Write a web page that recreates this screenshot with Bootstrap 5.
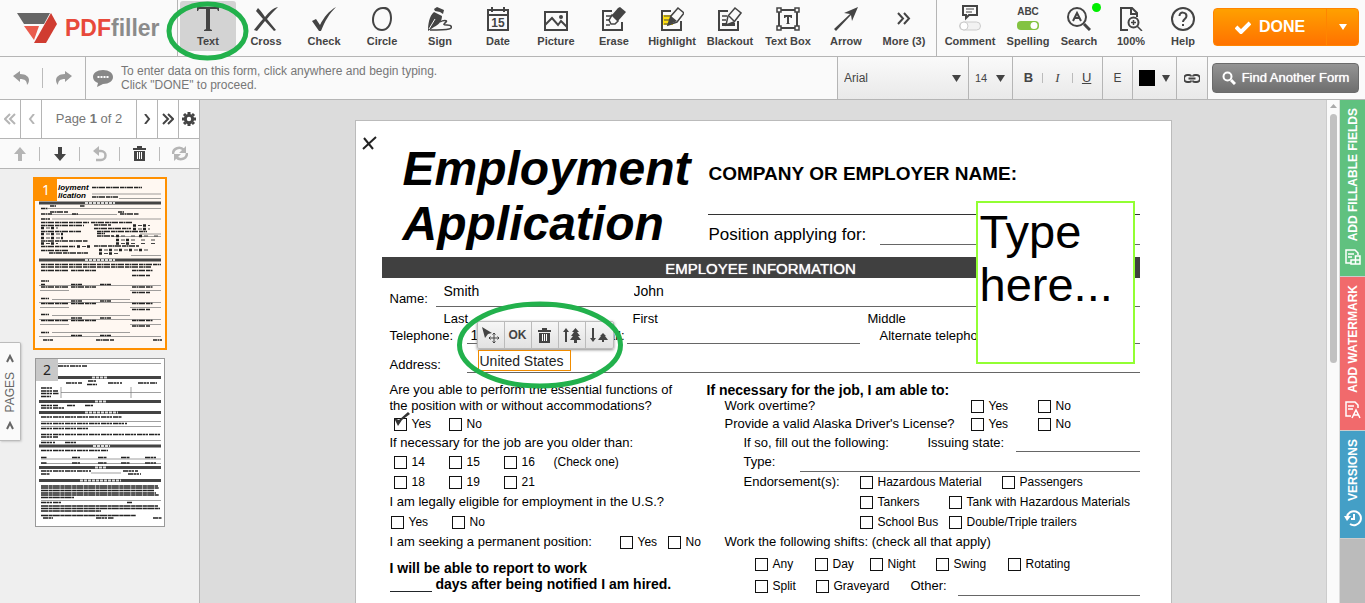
<!DOCTYPE html>
<html lang="en">
<head>
<meta charset="utf-8">
<meta name="viewport" content="width=device-width, initial-scale=1">
<title>PDFfiller - Employment Application</title>
<link href="https://cdn.jsdelivr.net/npm/bootstrap@5.3.0/dist/css/bootstrap.min.css" rel="stylesheet">
<style>
:root{--line:#b5b5b5;--ink:#444;--green:#22b14c}
body{font-family:"Liberation Sans",Arial,sans-serif;font-size:13px;line-height:16px;color:var(--ink);background:#dcdcdc}
button,input,select,textarea{font-family:inherit;color:inherit}
button{border:0;background:none;padding:0}
svg{display:block;flex:none}
.ico{fill:none;stroke:currentColor;stroke-width:2}
.topbar{background:#fafafa;border-bottom:1px solid var(--line);height:57px}
.brand-area{width:178px;border-right:1px solid var(--line);padding-left:17px;gap:7px}
.brand-name{font-size:23px;font-weight:700;line-height:30px;color:#e8493a}
.brand-name span{color:#8b8b8b}
.tool{width:58px;height:50px;margin-top:1px;padding-top:6px;font-size:11px;font-weight:700;line-height:14px;display:flex;flex-direction:column;align-items:center;gap:3px;border-radius:3px;white-space:nowrap}
.tool-on .tool-face{background:#d3d3d3}
.tool-face{border-radius:3px;width:56px;height:50px;margin-top:-6px;padding-top:6px;display:flex;flex-direction:column;align-items:center;gap:3px}
.tool-sm{width:52px}
.tool-mid{width:50px}
.tool-wide{width:66px;padding-top:4px}
.tools{padding-left:1px}
.done{background:linear-gradient(#ffa000,#ff7200);border:1px solid #ff8500;border-radius:4px;color:#fff;width:146px;height:38px;margin:8px 6px 0 4px}
.done b{font-size:16px}
.done-more{width:32px;border-left:1px solid #ff8500}
.optbar{background:#fafafa;border-bottom:1px solid var(--line);height:43px}
.undo-area{width:86px;border-right:1px solid var(--line);gap:13px}
.sep{width:1px;height:20px;background:#bbb}
.hint{font-size:12px;line-height:14px;color:#777;padding-left:7px;gap:8px}
.opt{background:linear-gradient(#fafafa,#e9e9e9);border-left:1px solid var(--line);display:flex;align-items:center;justify-content:center}
.opt select{appearance:none;border:0;background:transparent;font-size:12px;padding:0;min-width:0;flex:1}
.opt .size-pick{font-size:11px}
.opt-font{width:131px;padding:0 7px 0 6px}
.opt-size{width:44px;padding:0 7px 0 6px}
.opt-style{width:90px;gap:9px}
.opt-style .sep{height:10px}
.opt-style i{font-family:"Liberation Serif",serif}
.opt-erase{width:30px;font-size:12px}
.opt-color{width:44px}
.opt-color button{gap:7px}
.opt-link{width:32px;border-right:1px solid var(--line)}
.find{background:linear-gradient(#949494,#6e6e6e);border:1px solid #6b6b6b;border-radius:4px;color:#fff;width:147px;height:30px;margin:6px 6px 0 4px;gap:6px;font-size:13px;text-shadow:0 0 1px #fff}
.side{width:200px;background:#efefef;border-right:1px solid var(--line)}
.pager{height:39px;background:#fff;border-bottom:1px solid var(--line);color:#777}
.pager button{width:21px;border-right:1px solid var(--line);color:var(--ink);display:flex;align-items:center;justify-content:center}
.pager button:last-child{border-right:0;width:20px}
.pager .dim,.acts .dim{color:#b5b5b5}
.pager .page-no{border-right:1px solid var(--line)}
.acts{height:30px;background:#fafafa;border-bottom:1px solid var(--line)}
.acts .sep{height:14px}
.acts button{flex:1;display:flex;justify-content:center}
.thumbs{padding:8px 0 0 1px;gap:8px}
.thumb{position:relative;display:block;margin:0 auto}
.thumb span{position:absolute;left:0;top:0;width:22px;height:22px;font:14px/22px "Noto Sans",sans-serif;text-align:center}
.thumb-1{width:134px;height:173px;border:2px solid #ff9000;background:#fff8f2}
.thumb-1 span{background:#ff9000;color:#fff}
.thumb-2{width:130px;height:169px;border:1px solid #999;background:#fff}
.thumb-2 span{background:#c8c8c8;color:#222}
.pages-tab{position:absolute;left:0;top:242px;width:21px;height:99px;padding:11px 0 10px;background:#fafafa;border:1px solid #bbb;border-left:0;border-radius:0 2px 2px 0;box-shadow:1px 1px 2px #ccc;font-size:12px;color:#666}
.upward{writing-mode:vertical-rl;transform:rotate(180deg);white-space:nowrap}
.canvas{overflow:hidden}
.work-area{min-height:0}
.scroller{width:14px;background:#fafafa;border-left:1px solid #ccc;border-right:1px solid #ddd}
.scroller i{width:7px;height:249px;border-radius:4px;background:#c1c1c1;margin-top:6px}
.right-tabs{width:25px;background:#bbb}
.right-tabs button{color:#fff;font-size:12px;font-weight:700;display:flex;flex-direction:column;align-items:center;gap:8px;border-bottom:1px solid #ccc;padding:8px 0 11px}
.tab-fields{background:#60c17f}
.tab-mark{background:#f16a6c}
.tab-versions{background:#449fc6}
.sheet{width:100%;max-width:817px;min-height:520px;margin:20px auto 0;padding:0 31px 0 26px;background:#fff;border:1px solid #bbb;position:relative;color:#000}
.sheet-head{display:grid;grid-template-columns:326px 1fr;height:136px}
.sheet h1{font-size:48px;line-height:55px;font-weight:700;font-style:italic;margin:0;padding:20px 0 0 21px}
.company{margin-top:43px;height:51px;border-bottom:1px solid #333;font-size:19px;line-height:20px;font-weight:700;padding-left:1px}
.position{height:30px;font-size:17px;line-height:20px;padding-left:1px;gap:14px}
.rule{border-bottom:1px solid #666;align-self:stretch}
.band{background:#404040;color:#fff;height:21px;font-size:15px;line-height:23px;text-align:center;text-shadow:0 0 1px #fff}
.frow{display:flex;align-items:flex-end;font-size:13px;line-height:16px}
.frow .rule input{border:0;background:none;padding:0;font-size:14px;line-height:16px;height:16px;width:100px}
.h29{height:29px}.h20{height:20px}.h17{height:17px}
.names{display:grid;grid-template-columns:190px 1fr;align-items:end;padding:0 0 7px 8px}
.subnames{display:grid;grid-template-columns:189px 235px 1fr;padding-left:54px;width:100%}
.w46{width:46px}.w77{width:77px}.w122{width:122px}.w34{width:34px}.w233{width:233px}
.qs{display:grid;grid-template-columns:317px 1fr;padding:9px 0 0 8px}
.qs .ln{display:flex;align-items:center;height:20px;font-size:13px;white-space:nowrap}
.qs .l16{height:16px}.qs .l18{height:18px}
.qs .strong{font-weight:700;font-size:14px}
.gap-above{margin-top:2px}
.in17{padding-left:18px}.in36{padding-left:37px}.in48{padding-left:48px}
.w184{width:184px}.w88{width:88px}.w56{width:56px}
.opts{display:grid!important;align-items:center}
.opts label{display:flex;align-items:center;gap:5px;font-size:12px}
.opts input{appearance:none;width:13px;height:13px;border:1px solid #111;border-radius:0;margin:0;background:#fff;flex:none}
.c-age{grid-template-columns:55px 55px 50px 1fr;padding-left:4px}
.c-yn{grid-template-columns:61px 1fr;padding-left:1px}
.c-seek{grid-template-columns:230px 48px 1fr}
.c-work{grid-template-columns:246px 67px 1fr}
.c-end{grid-template-columns:116px 142px 1fr}
.c-tank{grid-template-columns:89px 1fr;padding-left:153px}
.c-shift{grid-template-columns:60px 55px 66px 72px 1fr}
.c-split{grid-template-columns:61px 95px 47px 1fr}
.type-box{position:absolute;left:620px;top:80px;width:159px;height:163px;border:2px solid #92ff33;background:#fff;font-size:47px;line-height:53px;padding:2px;resize:none;overflow:hidden}
.type-box::placeholder{color:#000;opacity:1}
.field-edit{position:absolute;left:121px;top:200px}
.mini{height:28px;border:1px solid #bbb;border-radius:2px;background:linear-gradient(#f6f6f6,#e2e2e2);box-shadow:0 1px 3px #888;color:var(--ink)}
.mini button{width:27px;display:flex;align-items:center;justify-content:center;border-right:1px solid #bbb;font-size:12px;font-weight:700}
.mini button:last-child{border:0}
.field-edit input{display:block;width:93px;height:21px;margin:1px 0 0 1px;border:1px solid #f08c00;padding:0 1px;font-size:14px;background:#fff;color:#222}
.ring-a{position:absolute;left:166px;top:1px;z-index:5;pointer-events:none}
.ring-b{position:absolute;left:101px;top:180px;pointer-events:none}
.mark-x{position:absolute;left:6px;top:15px}
.mark-v{position:absolute;left:0;top:-4px}
.live-dot{position:absolute;right:4px;top:2px;width:9px;height:9px;border-radius:50%;background:#0e0}
</style>
</head>
<body class="vh-100 overflow-hidden d-flex flex-column">

<header class="topbar d-flex flex-shrink-0 position-relative">
  <a href="#" class="brand-area d-flex align-items-center text-decoration-none flex-shrink-0">
    <svg width="41" height="31" viewBox="0 0 41 31"><path fill="#666" d="M0 0h33l-6 11H7z"/><path fill="#ea5b4c" d="M7 13h15l-5 14z"/><path fill="#d03c31" d="M34 0l6 11-11 19H17z"/></svg>
    <span class="brand-name">PDF<span>filler</span></span>
  </a>
  <svg class="ring-a" width="83" height="60" viewBox="0 0 83 60"><ellipse cx="41.500" cy="30" rx="38.500" ry="27" fill="none" stroke="#22b14c" stroke-width="5"/></svg>
  <nav class="tools d-flex flex-grow-1">
    <button class="tool tool-on"><span class="tool-face"><svg width="24" height="24" viewBox="0 0 24 24" fill="#444"><path d="M1 0h22v4h-1l-1-2h-7v20l2 1v1H8v-1l2-1V2H3L2 4H1z"/></svg>Text</span></button>
    <button class="tool"><svg width="24" height="24" viewBox="0 0 24 24" fill="#444"><path d="M4 1c3 3 5 6 7 9 4-5 8-9 13-10-4 4-8 8-11 12l9 11-2 1-9-10-8 10-3-1c3-4 6-8 9-11L2 4z"/></svg>Cross</button>
    <button class="tool"><svg width="24" height="24" viewBox="0 0 24 24" fill="#444"><path d="M0 14l4-2 4 6C12 10 17 4 24 0 17 7 13 14 9 24H7z"/></svg>Check</button>
    <button class="tool"><svg width="24" height="24" viewBox="0 0 24 24"><path fill="#444" fill-rule="evenodd" d="M13 0c7-1 9 6 9 11 0 7-4 13-10 13S2 19 2 13C2 6 6 0 13 0zm0 2C7 2 4 7 4 13c0 5 3 9 8 9s8-5 8-11c0-5-2-9-7-9z"/></svg>Circle</button>
    <button class="tool"><svg width="24" height="24" viewBox="0 0 24 24"><path fill="#444" d="M6 2l3-2 7 3-1 4-3-2-5-1zM6 5l8 4c0 6-4 9-8 11l-6 4c0-6 1-15 6-19z"/><path stroke="#fafafa" d="M1 22L7 12"/><path fill="none" stroke="#444" stroke-width="1.500" d="M12 15c3-2 8-2 6 0s-4 3 1 3 6 3 2 4-11 1-19 1"/></svg>Sign</button>
    <button class="tool"><svg width="24" height="24" viewBox="0 0 24 24"><path class="ico" d="M2 3h20v20H2zM2 8h20M6 0v5m12-5v5"/><text x="12" y="20" text-anchor="middle" font-size="12" font-weight="700" fill="#444">15</text></svg>Date</button>
    <button class="tool"><svg width="24" height="24" viewBox="0 0 24 24"><path class="ico" d="M1 5h22v18H1zM1 18l7-7 6 7 3-4 6 6"/><circle cx="17" cy="10" r="2" fill="#444"/></svg>Picture</button>
    <button class="tool"><svg width="24" height="24" viewBox="0 0 24 24"><path class="ico" d="M10 4H1v19h19v-8"/><path stroke="#444" stroke-width="1.500" d="M4 9h5m-5 4h3m-3 5h4"/><path d="M16 1l2-1 6 5-8 9-6-6z" fill="#444"/><path d="M10 8l6 6-3 3H9l-2-4z" fill="#fafafa" stroke="#444" stroke-width="1.500"/></svg>Erase</button>
    <button class="tool"><svg width="24" height="24" viewBox="0 0 24 24"><path fill="#ffe012" d="M3 8h10v10H3z"/><path class="ico" d="M11 4H2v19h19v-9"/><path stroke="#444" d="M4 9h7m-7 4h5m-5 4h6"/><path d="M18 1l6 5-7 9-9 3 3-9z" fill="#fafafa" stroke="#444" stroke-width="1.500"/><path d="M11 9l6 5-9 4z" fill="#444"/></svg>Highlight</button>
    <button class="tool"><svg width="24" height="24" viewBox="0 0 24 24"><path class="ico" d="M10 4H1v19h19v-9"/><path stroke="#444" stroke-width="1.500" d="M4 9h5m-5 4h4"/><path d="M4 16h13v3H4z" fill="#444"/><path d="M17 1l6 5-7 9-8 3 2-9z" fill="#fafafa" stroke="#444" stroke-width="1.500"/><path stroke="#444" stroke-width="1.500" d="M11 9l5 5"/></svg>Blackout</button>
    <button class="tool"><svg width="24" height="24" viewBox="0 0 24 24"><path class="ico" d="M3 3h18v18H3z"/><path d="M1 1h4v4H1zM19 1h4v4h-4zM1 19h4v4H1zM19 19h4v4h-4z" fill="#fafafa" stroke="#444" stroke-width="1.500"/><path d="M8 8h8v3h-1l-1-1h-1v6l1 1h-4l1-1v-6h-1l-1 1H8z" fill="#444"/></svg>Text Box</button>
    <button class="tool"><svg width="24" height="24" viewBox="0 0 24 24" fill="#444"><path d="M24 0l-6 14-1-6L2 24l-2-2L16 7l-6-1z"/></svg>Arrow</button>
    <button class="tool"><svg width="24" height="24" viewBox="0 0 24 24"><path class="ico" d="M6 6l5 5.500L6 17M12 6l5 5.500-5 5.500"/></svg>More (3)</button>
  </nav>
  <div class="d-flex border-start" style="border-color:#b5b5b5!important">
    <button class="tool tool-wide"><svg width="24" height="26" viewBox="0 0 24 26"><path class="ico" d="M5 1h14v9h-8l-3 3v-3H5z"/><path d="M8 4h8M8 7h6" stroke="#444"/><rect x="1.500" y="17" width="21" height="8" rx="4" fill="#f2f2f2" stroke="#ccc"/><circle cx="6" cy="21" r="4" fill="#fff" stroke="#ccc"/></svg>Comment</button>
    <button class="tool tool-mid"><svg width="24" height="24" viewBox="0 0 24 24"><text x="12" y="8" text-anchor="middle" font-size="10" font-weight="700" fill="#444">ABC</text><rect x="1" y="14" width="22" height="9" rx="4" fill="#83c341"/><circle cx="18" cy="18.500" r="3.500" fill="#fff"/></svg>Spelling</button>
    <button class="tool tool-sm position-relative"><i class="live-dot"></i><svg width="24" height="24" viewBox="0 0 24 24"><g class="ico"><circle cx="10" cy="10" r="9"/><path stroke-width="3" d="M17 17l6 6"/><path d="M6 14l4-8 4 8M8 11h4"/></g></svg>Search</button>
    <button class="tool tool-sm"><svg width="24" height="24" viewBox="0 0 24 24"><g class="ico"><path d="M9 23H2V1h11l5 5v4M12 1v6h6"/><circle cx="14.500" cy="15.500" r="5"/><path d="M18 19l5 5M12 15.500h5M14.500 13v5" stroke-width="1.500"/></g></svg>100%</button>
    <button class="tool tool-sm"><svg width="24" height="24" viewBox="0 0 24 24"><g class="ico"><circle cx="12" cy="12" r="11"/><path d="M8.500 9c0-5 7-4 7 0 0 3-3.500 3-3.500 6M12 17v2"/></g></svg>Help</button>
  </div>
  <div class="done d-flex flex-shrink-0">
    <button class="flex-grow-1 d-flex align-items-center justify-content-center gap-2 text-white"><svg width="16" height="13" viewBox="0 0 16 13"><path d="M1 6l5 5 9-9" fill="none" stroke="#fff" stroke-width="4"/></svg><b>DONE</b></button>
    <button class="done-more d-flex align-items-center justify-content-center" aria-label="More"><svg width="8" height="6"><path d="M0 0h8L4 6z" fill="#fff"/></svg></button>
  </div>
</header>

<div class="optbar d-flex flex-shrink-0">
  <div class="undo-area d-flex align-items-center justify-content-center flex-shrink-0">
    <button aria-label="Undo"><svg width="16" height="14" viewBox="0 0 16 14" fill="#999"><path d="M0 5l7-5v3c6 0 9 3 9 6 0 2-1 4-2 5 0-4-2-6-7-6v3z"/></svg></button>
    <span class="sep"></span>
    <button aria-label="Redo"><svg width="16" height="14" viewBox="0 0 16 14" fill="#999"><path d="M16 5L9 0v3C3 3 0 6 0 9c0 2 1 4 2 5 0-4 2-6 7-6v3z"/></svg></button>
  </div>
  <div class="d-flex align-items-center flex-grow-1 hint">
    <svg width="20" height="17" viewBox="0 0 20 17"><path fill="#888" d="M10 0c6 0 10 3 10 7s-4 7-10 7l-6 3 1-4C2 12 0 10 0 7c0-4 4-7 10-7z"/><path stroke="#fff" stroke-width="2" stroke-dasharray="2 1" d="M4.500 7h11"/></svg>
    <div>To enter data on this form, click anywhere and begin typing.<br>Click "DONE" to proceed.</div>
  </div>
  <label class="opt opt-font"><select aria-label="Font"><option>Arial</option></select><svg width="9" height="7"><path d="M0 0h9L4.500 7z" fill="#444"/></svg></label>
  <label class="opt opt-size"><select class="size-pick" aria-label="Size"><option>14</option></select><svg width="9" height="7"><path d="M0 0h9L4.500 7z" fill="#444"/></svg></label>
  <div class="opt opt-style">
    <button><b>B</b></button><span class="sep"></span><button><i>&nbsp;I&nbsp;</i></button><span class="sep"></span><button><u>U</u></button>
  </div>
  <div class="opt opt-erase"><button>E</button></div>
  <div class="opt opt-color"><button class="d-flex align-items-center" aria-label="Colour"><svg width="16" height="16"><path d="M0 0h16v16H0z"/></svg><svg width="8" height="7"><path d="M0 0h8L4 7z" fill="#444"/></svg></button></div>
  <div class="opt opt-link"><button aria-label="Link"><svg width="16" height="9" viewBox="0 0 16 9"><path fill="none" stroke="#444" stroke-width="2" d="M7 2.500C7 1.500 6 1 5 1H3.500a3.500 3.500 0 000 7H5c1 0 2-.5 2-1.500M9 2.500C9 1.500 10 1 11 1h1.500a3.500 3.500 0 010 7H11c-1 0-2-.5-2-1.500M4.500 4.500h7"/></svg></button></div>
  <button class="find d-flex align-items-center justify-content-center flex-shrink-0"><svg width="14" height="14" viewBox="0 0 14 14"><circle cx="5.500" cy="5.500" r="4" fill="none" stroke="#fff" stroke-width="2"/><path stroke="#fff" stroke-width="3" d="M9 9l4 4"/></svg>Find Another Form</button>
</div>

<div class="work-area d-flex flex-grow-1">
  <aside class="side position-relative flex-shrink-0">
    <div class="pager d-flex">
      <button class="dim" aria-label="First"><svg width="12" height="12"><path class="ico" d="M6 1L1 6l5 5M11 1L6 6l5 5"/></svg></button>
      <button class="dim" aria-label="Previous"><svg width="7" height="10"><path class="ico" d="M6 0L2 5l4 5"/></svg></button>
      <div class="page-no flex-grow-1 d-flex align-items-center justify-content-center"><span>Page <b>1</b> of 2</span></div>
      <button aria-label="Next"><svg width="7" height="10"><path class="ico" d="M1 0l4 5-4 5"/></svg></button>
      <button aria-label="Last"><svg width="12" height="12"><path class="ico" d="M1 1l5 5-5 5M6 1l5 5-5 5"/></svg></button>
      <button aria-label="Settings"><svg width="14" height="14" viewBox="0 0 14 14"><circle cx="7" cy="7" r="3.700" fill="none" stroke="#444" stroke-width="3"/><path stroke="#444" stroke-width="3" d="M7 0v2m0 10v2M0 7h2m10 0h2M2 2l1.500 1.500m7 7L12 12M2 12l1.500-1.500m7-7L12 2"/></svg></button>
    </div>
    <div class="acts d-flex align-items-center">
      <button class="dim" aria-label="Move up"><svg width="12" height="14"><path fill="#b5b5b5" d="M6 0l6 7H8v7H4V7H0z"/></svg></button><span class="sep"></span>
      <button aria-label="Move down"><svg width="12" height="14"><path fill="#444" d="M6 14l6-7H8V0H4v7H0z"/></svg></button><span class="sep"></span>
      <button class="dim" aria-label="Rotate"><svg width="14" height="16" viewBox="0 0 14 16"><path fill="none" stroke="#b5b5b5" stroke-width="2.500" d="M5 5h3a4.500 4.500 0 110 9H3"/><path fill="#b5b5b5" d="M0 5l6-5v10z"/></svg></button><span class="sep"></span>
      <button aria-label="Delete"><svg width="13" height="15" viewBox="0 0 13 15"><path fill="#444" d="M0 2h4V0h5v2h4v2H0zM1 5h11v10H1z"/><path stroke="#fff" d="M4.500 6v7m2-7v7m2-7v7"/></svg></button><span class="sep"></span>
      <button class="dim" aria-label="Refresh"><svg width="16" height="15" viewBox="0 0 16 15"><path fill="none" stroke="#b5b5b5" stroke-width="2.500" d="M1 8c0-6 7-8 11-4M15 7c0 6-7 8-11 4"/><path fill="#b5b5b5" d="M14 0v7H7zM2 15V8h7z"/></svg></button>
    </div>
    <div class="thumbs d-flex flex-column">
      <button class="thumb thumb-1"><svg width="130" height="169" viewBox="35 179 130 169"><g font-weight="700" font-style="italic" font-size="8"><text x="58" y="190">loyment</text><text x="58" y="198">lication</text></g>
        <path stroke="#444" stroke-width="3" d="M39 203h122M39 260h122"/>
        <path stroke="#ddd" stroke-width="2" stroke-dasharray="3 1" d="M85 203h30M85 260h30"/>
        <path stroke="#777" stroke-width=".7" d="M92 194h69M119 198.500h42M48 208.500h113M52 214.500h65M52 219h109M140 234h21M112 236.500h49M131 255.500h30M39 285.500h122M40 290.500h29M130 290.500h31M52 299.500h78M39 302.500h122M40 307.500h29M130 307.500h31M52 315.500h78M39 319.500h122M40 324.500h29M130 324.500h31M52 332.500h78M39 336.500h122"/>
        <path stroke="#222" stroke-width="1.500" stroke-dasharray="4 .5 2 .5 6 1" d="M92 187.500h50M92 197h26M50 206h6M80 206h5M41 208.500h7M50 212h18M118 212h6M41 214h11M72 214h6M120 214h19M41 219h9M41 222.500h48M91 222.500h41M41 225.500h43M94 225h17M94 228.500h37M41 231.500h40M97 231.500h50M97 233.500h8M97 236h17M41 241h47M41 246.500h34M94 246h45M41 250.500h27M49 253h39M41 264.500h120M41 267h110M41 270.500h28M71 270.500h25M132 270.500h21M132 275.500h18M41 281h8M41 284.500h4M71 284.500h11M100 284.500h11M41 287h28M71 287h25M132 287h21M132 292.500h18M41 298.500h8M71 301h11M100 301h11M41 303.500h28M71 303.500h25M132 303.500h21M132 309.500h18M41 314.500h8M71 318h11M100 318h11M41 320.500h28M71 320.500h25M132 320.500h21M132 326h18M41 332.500h8M71 335.500h11M100 335.500h11M43 340h10M96 340h18M153 340h9"/>
        <path stroke="#222" stroke-width="2.500" stroke-dasharray="3 7" d="M133 225.500h15M133 229h15M41 228h16M41 234h22M41 238h22M41 243.500h16M77 246.500h14M116 236h4M139 236h4M116 240h18M116 243.500h18M99 250h50M99 253.500h14"/>
        <path stroke="#444" stroke-width="1.200" stroke-dasharray="4 6" d="M138 225.500h12M138 229h12M46 228h12M46 234h20M46 238h20M46 243.500h12M82 246.500h10M121 236h17M144 236h16M121 240h38M121 243.500h34M104 250h45M104 253.500h20"/></svg><span>1</span></button>
      <button class="thumb thumb-2"><svg width="128" height="167" viewBox="36 359 128 167">
        <path stroke="#444" stroke-width="3" d="M39 377.500h122M39 401.500h122M39 412.500h122M39 446h122M39 467.500h122M39 480.500h122"/>
        <path stroke="#ddd" stroke-width="2" stroke-dasharray="3 1" d="M92 377.500h15M95 401.500h12M85 412.500h33M93 446h17M95 467.500h11M80 480.500h41"/>
        <path stroke="#777" stroke-width=".7" d="M58 363.500h103M61 387v11M131 387v11M61 392.500h100M41 421.500h120M41 426.500h120M41 440.500h120M41 459h120M41 463.500h120M91 473h30M41 500.500h120"/>
        <path stroke="#222" stroke-width="1.500" stroke-dasharray="5 .5 3 .5 2 1" d="M58 366h29M66 383h16M88 381h8M87 384.500h10M108 383h14M138 383h19M41 388h12M41 391h17M41 393.500h18M41 396.500h10M41 405.500h17M67 405.500h8M85 405.500h8M41 408h23M41 417h81M41 423.500h86M41 428.500h48M41 434.500h119M41 437h17M41 442.500h14M65 442.500h12M41 450.500h67M41 457.500h6M72 457.500h8M98 457.500h9M121 457.500h9M145 457.500h11M41 463h6M72 463h8M98 463h9M121 463h9M145 463h11M41 471h50M123 471h15M41 474h9M128 474h13M41 502.500h20M127 502.500h5M43 518h10M96 518h18M153 518h9"/>
        <path stroke="#222" stroke-width="1.500" stroke-dasharray="7 .5 4 .3" d="M41 486h117M41 488h118M41 490.500h113M41 493h115M41 495h118M41 497.500h33M41 506h117M41 508.500h119M41 511h60M41 515.500h95"/></svg><span>2</span></button>
    </div>
    <button class="pages-tab d-flex flex-column align-items-center justify-content-between"><svg width="8" height="9"><path class="ico" d="M1 8l3-6 3 6"/></svg><span class="upward">PAGES</span><svg width="8" height="9"><path class="ico" d="M1 8l3-6 3 6"/></svg></button>
  </aside>

  <main class="canvas flex-grow-1">
    <div class="sheet">
      <div class="sheet-head">
        <h1>Employment<br>Application</h1>
        <div>
          <div class="company">COMPANY OR EMPLOYER NAME:</div>
          <div class="position d-flex align-items-end"><span>Position applying for:</span><span class="rule flex-fill"></span></div>
        </div>
      </div>
      <div class="band">EMPLOYEE INFORMATION</div>
      <div class="ps-2">
        <div class="frow h29"><label class="w46" for="last">Name:</label><div class="rule flex-fill names"><input id="last" value="Smith"><input aria-label="First name" value="John"></div></div>
        <div class="frow h20"><div class="subnames"><span>Last</span><span>First</span><span>Middle</span></div></div>
        <div class="frow h17"><label class="w77" for="tel">Telephone:</label><div class="rule w122 ps-1"><input id="tel" value="1"></div><span class="w34 text-end me-1">Email:</span><span class="rule w233"></span><span class="px-3 ms-1">Alternate telephone:</span><span class="rule flex-fill"></span></div>
        <div class="frow h29"><label class="w77" for="addr">Address:</label><span class="rule flex-fill"></span></div>
      </div>
      <div class="qs">
        <div>
          <div class="ln l16">Are you able to perform the essential functions of</div>
          <div class="ln l16">the position with or without accommodations?</div>
          <div class="ln opts c-age"><label class="position-relative"><input type="checkbox">Yes<svg class="mark-v" width="16" height="14" viewBox="0 0 16 14"><path fill="#333" d="M0 6l5 2 9-8 2 2-8 6-4 6z"/></svg></label><label><input type="checkbox">No</label></div>
          <div class="ln l18">If necessary for the job are you older than:</div>
          <div class="ln opts c-age"><label><input type="checkbox">14</label><label><input type="checkbox">15</label><label><input type="checkbox">16</label><label>(Check one)</label></div>
          <div class="ln opts c-age"><label><input type="checkbox">18</label><label><input type="checkbox">19</label><label><input type="checkbox">21</label></div>
          <div class="ln">I am legally eligible for employment in the U.S.?</div>
          <div class="ln opts c-yn"><label><input type="checkbox">Yes</label><label><input type="checkbox">No</label></div>
          <div class="ln opts c-seek"><span>I am seeking a permanent position:</span><label><input type="checkbox">Yes</label><label><input type="checkbox">No</label></div>
          <div class="ln l16 strong mt-2">I will be able to report to work</div>
          <div class="ln l16 strong"><span class="w46 pe-1 align-self-stretch d-flex"><span class="rule w-100 border-dark"></span></span>days after being notified I am hired.</div>
        </div>
        <div>
          <div class="ln l16 strong">If necessary for the job, I am able to:</div>
          <div class="ln l16 opts c-work in17"><span>Work overtime?</span><label><input type="checkbox">Yes</label><label><input type="checkbox">No</label></div>
          <div class="ln opts c-work in17"><span>Provide a valid Alaska Driver's License?</span><label><input type="checkbox">Yes</label><label><input type="checkbox">No</label></div>
          <div class="ln l18 in36"><span class="w184">If so, fill out the following:</span><span class="w88">Issuing state:</span><span class="rule flex-fill"></span></div>
          <div class="ln in36"><span class="w56">Type:</span><span class="rule flex-fill"></span></div>
          <div class="ln opts c-end in36"><span>Endorsement(s):</span><label><input type="checkbox">Hazardous Material</label><label><input type="checkbox">Passengers</label></div>
          <div class="ln opts c-tank"><label><input type="checkbox">Tankers</label><label><input type="checkbox">Tank with Hazardous Materials</label></div>
          <div class="ln opts c-tank"><label><input type="checkbox">School Bus</label><label><input type="checkbox">Double/Triple trailers</label></div>
          <div class="ln in17">Work the following shifts: (check all that apply)</div>
          <div class="ln opts c-shift in48 gap-above"><label><input type="checkbox">Any</label><label><input type="checkbox">Day</label><label><input type="checkbox">Night</label><label><input type="checkbox">Swing</label><label><input type="checkbox">Rotating</label></div>
          <div class="ln opts c-split in48 gap-above"><label><input type="checkbox">Split</label><label><input type="checkbox">Graveyard</label><span>Other:</span><span class="rule"></span></div>
        </div>
      </div>
      <svg class="mark-x" width="15" height="14" viewBox="0 0 15 14"><path stroke="#222" stroke-width="2" d="M2 2l9 11M1 13L14 1"/></svg>
      <div class="field-edit">
        <div class="mini d-flex">
          <button aria-label="Move"><svg width="17" height="17" viewBox="0 0 17 17"><path fill="#444" d="M0 0l10 6-4 1-3 4z"/><path fill="none" stroke="#444" d="M12 6v10M7 11h10M10.500 7.500L12 6l1.500 1.500M10.500 14.500L12 16l1.500-1.500M8.500 9.500L7 11l1.500 1.500M15.500 9.500L17 11l-1.500 1.500"/></svg></button>
          <button>OK</button>
          <button aria-label="Delete"><svg width="13" height="15" viewBox="0 0 13 15"><path fill="#444" d="M0 2h4V0h5v2h4v2H0zM1 5h11v10H1z"/><path stroke="#fff" d="M4.500 6v7m2-7v7m2-7v7"/></svg></button>
          <button aria-label="Bring forward"><svg width="18" height="15" viewBox="0 0 18 15" fill="#444"><path d="M3 0l3 4H4v10H2V4H0zM12.500 0l3.500 4h-2l3 4h-2l3 4h-4v3h-3v-3H7l3-4H8l3-4H9z"/></svg></button>
          <button aria-label="Send back"><svg width="18" height="15" viewBox="0 0 18 15" fill="#444"><path d="M3 14l3-4H4V0H2v10H0zM13 5l3 3h-1l3 4h-4v2h-2v-2H8l3-4h-1z"/></svg></button>
        </div>
        <input id="addr" value="United States">
      </div>
      <textarea class="type-box" aria-label="Text" placeholder="Type here..."></textarea>
      <svg class="ring-b" width="166" height="88" viewBox="0 0 166 88"><ellipse cx="83" cy="44" rx="80.500" ry="41" fill="none" stroke="#22b14c" stroke-width="5"/></svg>
    </div>
  </main>
  <div class="scroller d-flex flex-column align-items-center flex-shrink-0 pt-1"><svg width="7" height="4"><path d="M0 4l3.500-4L7 4z" fill="#aaa"/></svg><i></i></div>
  <div class="right-tabs d-flex flex-column flex-shrink-0">
    <button class="tab-fields"><span class="upward">ADD FILLABLE FIELDS</span><svg width="16" height="16" viewBox="0 0 16 16"><path fill="none" stroke="#fff" stroke-width="1.500" d="M6 14H1V1h9l3 3v2M6 11h9v4H6zM10.500 15v-8H15v8M3 5h6M3 8h4"/></svg></button>
    <button class="tab-mark"><span class="upward">ADD WATERMARK</span><svg width="16" height="18" viewBox="0 0 16 18"><path fill="none" stroke="#fff" stroke-width="1.500" d="M6 15H1V1h9l3 3v3M3 5h6M3 8h5M7 17l4-8 4 8M9 14h5"/></svg></button>
    <button class="tab-versions"><span class="upward">VERSIONS</span><svg width="18" height="18" viewBox="0 0 18 18"><path fill="none" stroke="#fff" stroke-width="2" d="M3 8a7 7 0 113 7M10 5v5H7"/><path fill="#fff" d="M0 7h7l-4 5z"/></svg></button>
  </div>
</div>
<script src="https://cdn.jsdelivr.net/npm/bootstrap@5.3.0/dist/js/bootstrap.bundle.min.js"></script>
</body>
</html>
